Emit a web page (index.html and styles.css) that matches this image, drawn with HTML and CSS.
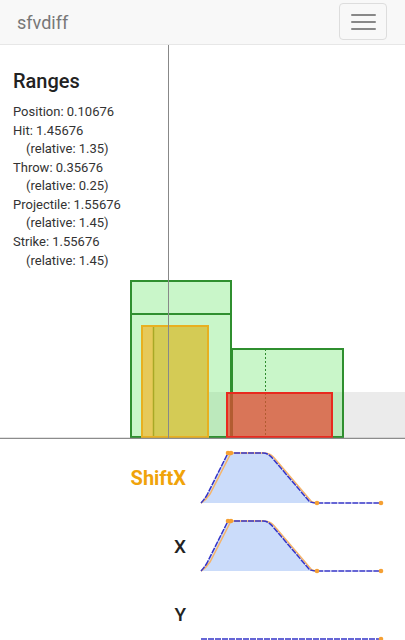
FILE: index.html
```html
<!DOCTYPE html>
<html lang="en">
<head>
  <meta charset="UTF-8">
  <meta name="viewport" content="width=device-width, initial-scale=1.0">
  <title>sfvdiff</title>
  <link rel="stylesheet" href="styles.css">
</head>
<body>
  <nav class="navbar">
    <span class="brand">sfvdiff</span>
    <button class="toggle" type="button">
      <span class="icon-bar"></span>
      <span class="icon-bar"></span>
      <span class="icon-bar"></span>
    </button>
  </nav>

  <section class="stage">
    <!-- hitbox canvas -->
    <svg class="boxes" viewBox="0 0 405 394" width="405" height="394">
      <rect x="180" y="347" width="225" height="46" fill="#ebebeb"/>
      <rect class="hurt" x="131" y="236" width="100" height="33"/>
      <rect class="hurt" x="131" y="269" width="100" height="123"/>
      <rect x="142" y="281" width="66" height="111" fill="#e6c95a"/>
      <rect x="153" y="282" width="55" height="110" fill="#d4cb55"/>
      <line x1="153.5" y1="282" x2="153.5" y2="392" stroke="#a8a826" stroke-width="1.5"/>
      <rect x="142" y="281" width="66" height="111" fill="none" stroke="#e8b020" stroke-width="2"/>
      <rect class="hurt" x="232" y="304" width="111" height="88"/>
      <line x1="265.5" y1="304" x2="265.5" y2="392" stroke="#2e8b2e" stroke-width="1" stroke-dasharray="2 2"/>
      <rect x="227" y="348" width="105" height="44" fill="rgba(228,72,50,0.72)" stroke="#e82a1e" stroke-width="2"/>
      <line x1="168.5" y1="0" x2="168.5" y2="393" stroke="#888" stroke-width="1"/>
      <line x1="0" y1="393.5" x2="405" y2="393.5" stroke="#8c8c8c" stroke-width="1.5"/>
    </svg>

    <div class="ranges">
      <h3>Ranges</h3>
      <div class="line">Position: 0.10676</div>
      <div class="line">Hit: 1.45676</div>
      <div class="line sub">(relative: 1.35)</div>
      <div class="line">Throw: 0.35676</div>
      <div class="line sub">(relative: 0.25)</div>
      <div class="line">Projectile: 1.55676</div>
      <div class="line sub">(relative: 1.45)</div>
      <div class="line">Strike: 1.55676</div>
      <div class="line sub">(relative: 1.45)</div>
    </div>
  </section>

  <section class="charts">
    <div class="label shift">ShiftX</div>
    <svg class="chart" viewBox="0 0 190 56" width="190" height="56">
      <path class="area" d="M4 53 Q7 50 10 45 L31 3 L66 3 Q72 3 77 10 L112 51 Q114 53 120 53 Z"/>
      <path class="ghost" d="M4 53 Q9 50 13 44 L34 3 L67 3 Q74 3 79 10 L114 51 Q116 53 121 53"/>
      <path class="curve" d="M4 53 Q7 50 10 45 L31 3 L66 3 Q72 3 77 10 L112 51 Q114 53 120 53 L184 53"/>
      <circle class="dot" cx="31" cy="3" r="2.3"/>
      <circle class="dot" cx="34" cy="3" r="2.3"/>
      <circle class="dot" cx="120" cy="53" r="2.3"/>
      <circle class="dot" cx="184" cy="53" r="2.3"/>
    </svg>

    <div class="label">X</div>
    <svg class="chart" viewBox="0 0 190 56" width="190" height="56">
      <path class="area" d="M4 53 Q7 50 10 45 L31 3 L66 3 Q72 3 77 10 L112 51 Q114 53 120 53 Z"/>
      <path class="ghost" d="M4 53 Q9 50 13 44 L34 3 L67 3 Q74 3 79 10 L114 51 Q116 53 121 53"/>
      <path class="curve" d="M4 53 Q7 50 10 45 L31 3 L66 3 Q72 3 77 10 L112 51 Q114 53 120 53 L184 53"/>
      <circle class="dot" cx="31" cy="3" r="2.3"/>
      <circle class="dot" cx="34" cy="3" r="2.3"/>
      <circle class="dot" cx="120" cy="53" r="2.3"/>
      <circle class="dot" cx="184" cy="53" r="2.3"/>
    </svg>

    <div class="label">Y</div>
    <svg class="chart" viewBox="0 0 190 56" width="190" height="56">
      <path class="curve" d="M4 53 L184 53"/>
      <circle class="dot" cx="184" cy="53" r="2.3"/>
    </svg>
  </section>
</body>
</html>
```

FILE: styles.css
```css
body {
  margin: 0;
  font-family: 'Roboto', 'Liberation Sans', sans-serif;
  color: #333;
  background: #fff;
  overflow: hidden;
}

.navbar {
  height: 44px;
  background-color: #f8f8f8;
  border-bottom: 1px solid #e7e7e7;
  display: flex;
  align-items: center;
  justify-content: space-between;
}

.brand {
  padding-left: 17px;
  padding-top: 2px;
  font-size: 18px;
  line-height: 20px;
  color: #777;
}

.toggle {
  width: 48px;
  height: 37px;
  margin-right: 18px;
  margin-top: -1px;
  padding: 10px 11px 9px;
  background: transparent;
  border: 1px solid #ddd;
  border-radius: 4px;
  display: flex;
  flex-direction: column;
  gap: 5px;
  box-sizing: border-box;
}

.icon-bar {
  display: block;
  width: 25px;
  height: 2px;
  background-color: #888;
  border-radius: 1px;
}

.stage {
  position: relative;
  height: 394px;
}

.boxes {
  position: absolute;
  left: 0;
  top: 0;
}

.boxes .hurt {
  fill: rgba(100, 230, 100, 0.35);
  stroke: #2f8f2f;
  stroke-width: 2;
}

.ranges {
  position: relative;
  padding: 25px 13px 0;
}

.ranges h3 {
  margin: 0 0 11px;
  font-size: 20px;
  line-height: 22px;
  font-weight: 500;
  color: #222;
}

.ranges .line {
  font-size: 13px;
  line-height: 18.57px;
  color: #333;
}

.ranges .sub {
  padding-left: 13px;
}

.charts {
  display: grid;
  grid-template-columns: 186px 190px;
  column-gap: 11px;
  row-gap: 12px;
  padding-top: 11px;
}

.label {
  align-self: center;
  text-align: right;
  font-size: 19px;
  font-weight: 500;
  color: #222;
}

.label.shift {
  color: #f0a30a;
  font-size: 20px;
  font-weight: 700;
}

.chart {
  display: block;
}

.chart .area {
  fill: #cbdcfa;
  stroke: none;
}

.chart .ghost {
  fill: none;
  stroke: #f6b46a;
  stroke-width: 1.5;
}

.chart .curve {
  fill: none;
  stroke: #3434c8;
  stroke-width: 1.5;
  stroke-dasharray: 6 1;
}

.chart .dot {
  fill: #f5a034;
}
```
